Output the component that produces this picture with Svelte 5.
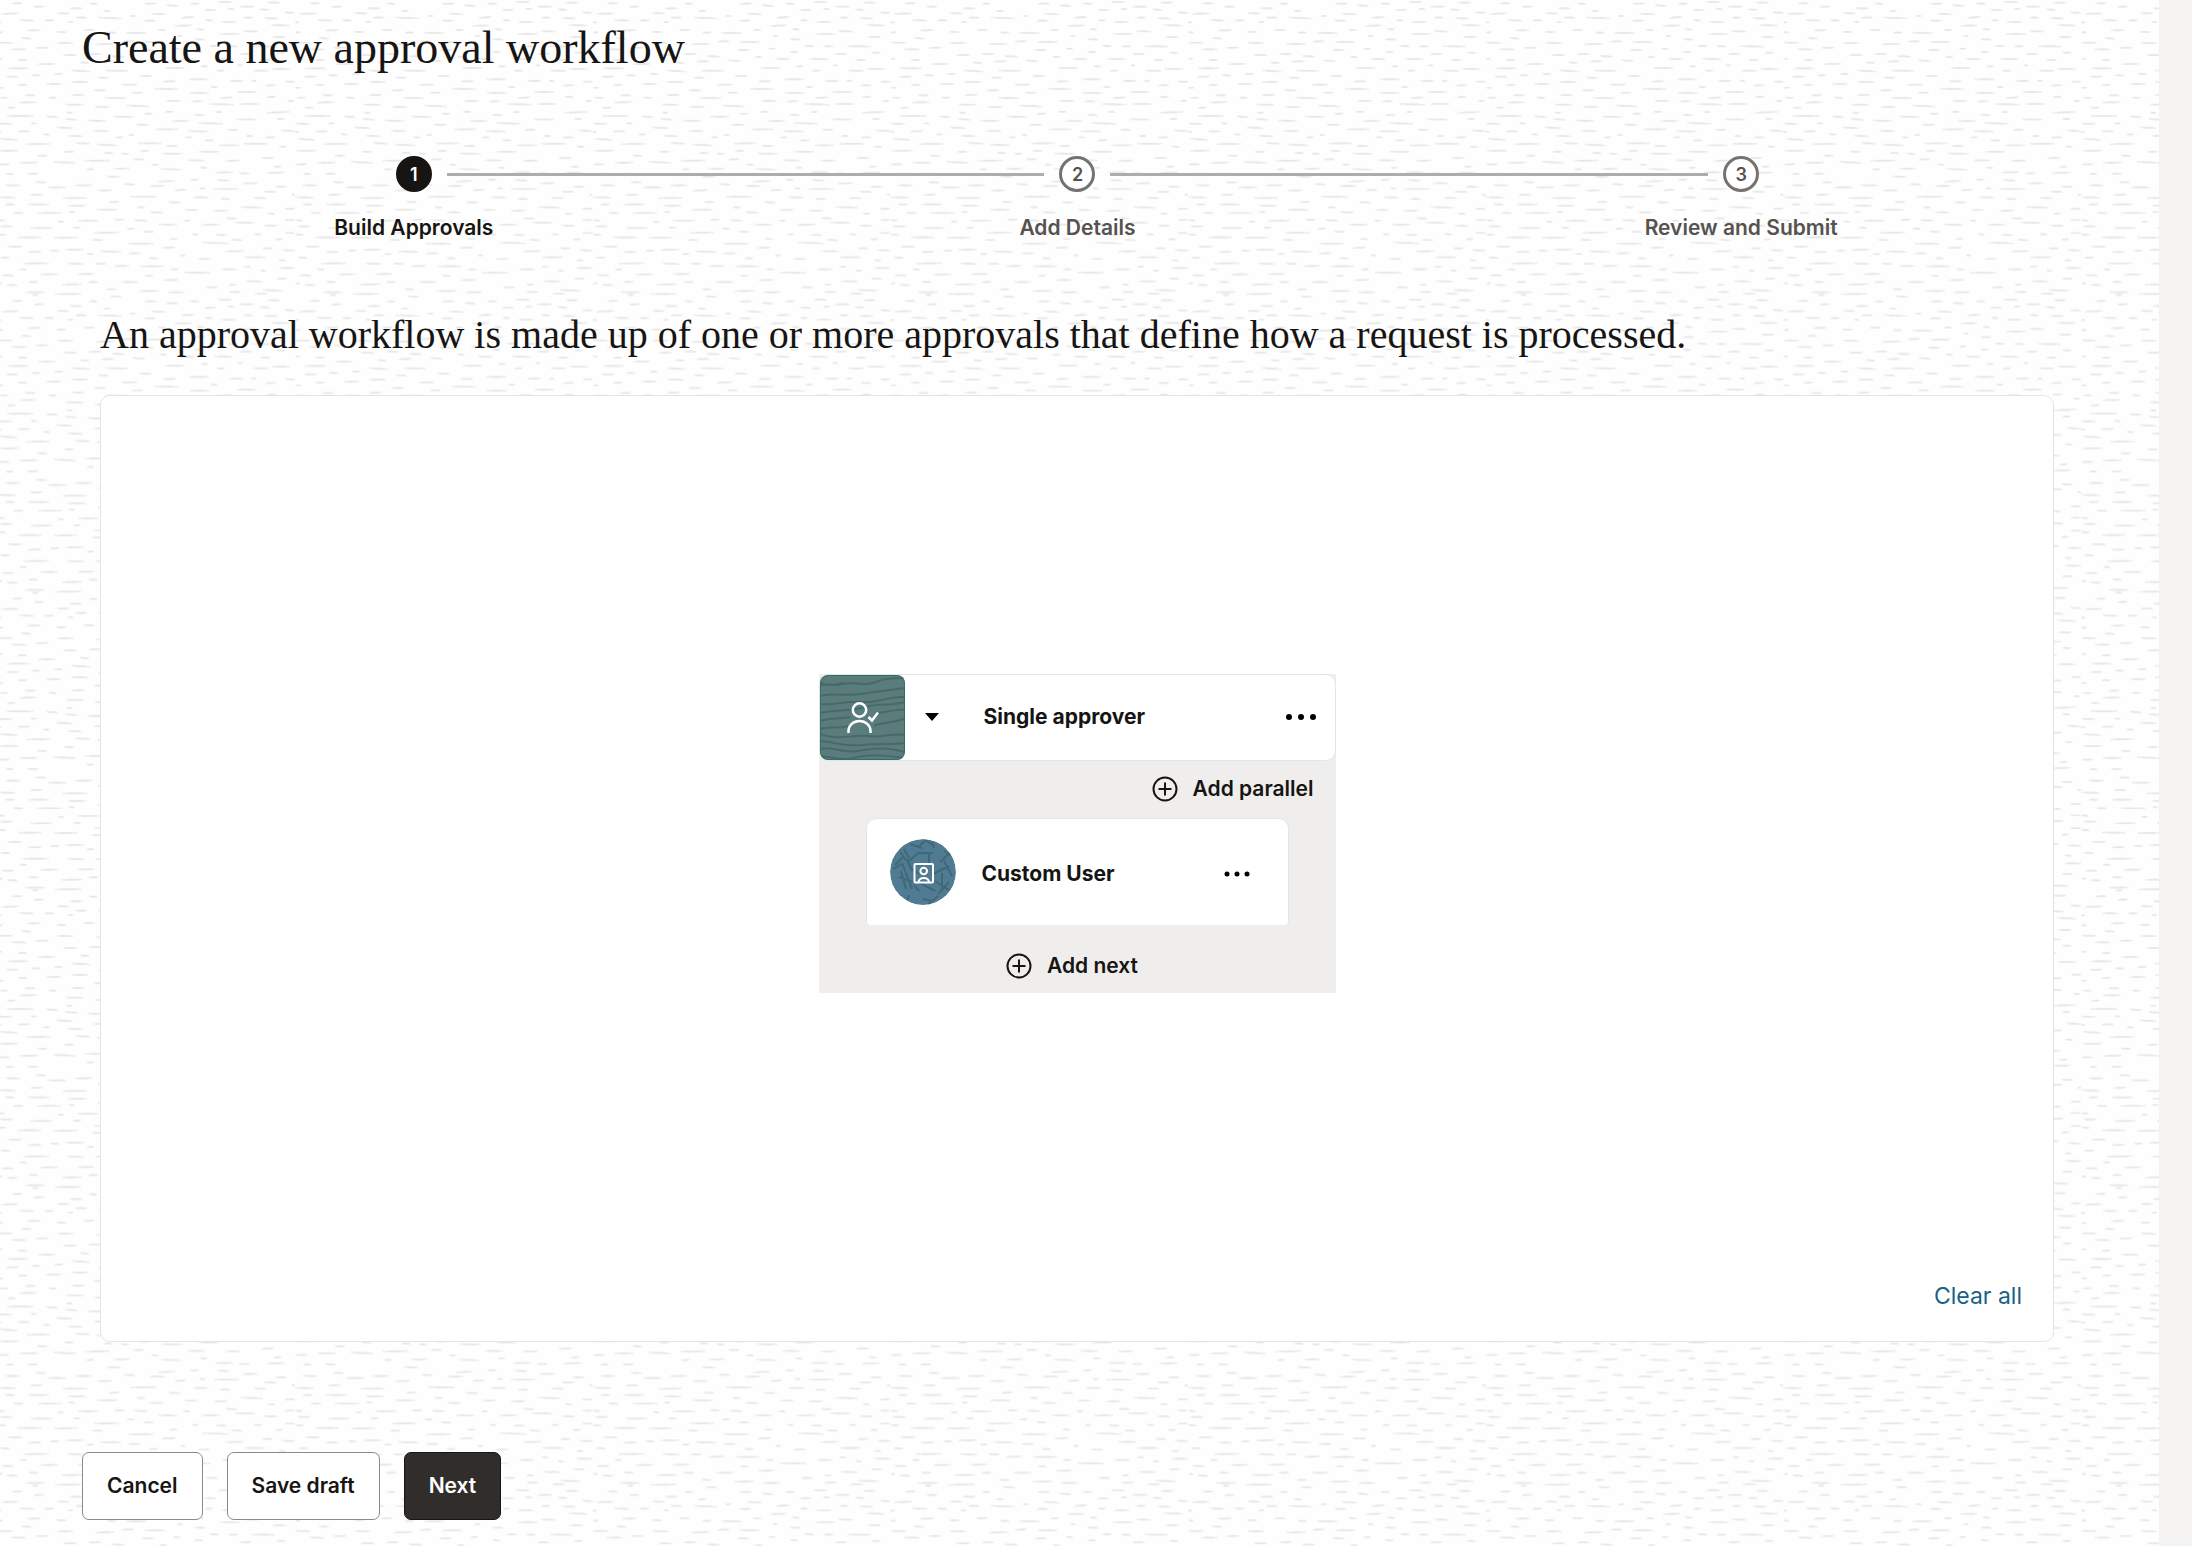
<script>
  const steps = [
    { number: 1, label: 'Build Approvals', current: true },
    { number: 2, label: 'Add Details', current: false },
    { number: 3, label: 'Review and Submit', current: false },
  ];

  // Grain strokes of one texture tile: [x start, y, x end, tilt]
  const grain = [
    [44,10,75,-1],[110,20,140,-1],[276,11,300,1],[442,11,478,-1],[508,17,542,3],[578,11,606,1],[663,6,703,1],[727,20,771,0],[812,8,848,0],[218,25,255,0],[318,33,340,-1],
    [12,41,64,-2],[180,40,216,1],[398,48,415,0],[462,42,507,3],[622,30,656,0],[692,27,711,1],[788,29,816,2],[862,38,893,2],[235,53,268,0],[302,54,373,3],[66,61,110,2],[141,61,170,0],[212,66,228,0],[1,67,12,0],
    [440,62,474,0],[552,52,590,-3],[624,61,646,0],[671,66,716,0],[740,53,766,0],[802,55,841,2],[822,76,876,2],[532,77,582,-2],[90,91,130,-1],[2,97,16,0],[178,96,207,1],[260,90,292,-1],[330,98,356,0],[388,99,447,1],[482,90,505,1],[598,88,620,2],
    [668,102,728,0],[738,94,782,2],[827,111,864,0],[540,108,556,0],[592,118,624,1],[72,115,102,2],[2,128,46,1],[180,129,228,1],[296,132,352,-2],[374,124,409,-2],[442,126,501,0],[116,143,153,-1],[42,148,88,1],[636,138,664,2],[694,139,721,0],[764,139,833,1],[528,146,548,0],[434,150,469,0],[592,156,616,2],[838,158,863,1],
    [727,162,763,-1],[198,165,238,0],[274,162,311,-1],[343,169,382,2],[487,171,509,1],[549,177,591,2],[651,177,706,2],[2,176,15,0],[62,180,89,0],[790,180,820,1],[406,182,443,3],[312,184,350,-1],[122,192,173,-1],[249,188,275,2],[721,196,735,1],[611,199,631,0],[504,204,562,0],[31,205,93,0],[824,207,878,1],
    [222,213,280,4],[326,212,392,1],[659,212,682,-1],[768,212,813,1],[171,222,196,-1],[102,226,129,1],[427,228,464,1],[28,230,64,-1],[303,233,334,1],[575,238,634,0],[223,246,272,0],[498,244,535,-1],[697,243,738,0],[762,243,778,0],[864,245,893,1],
    [62,255,89,-1],[147,252,192,-1],[373,254,419,-1],[804,256,836,-1],[2,263,18,0],[640,261,661,1],[472,267,543,1],[289,271,326,0],[404,278,437,0],[576,279,636,1],[719,276,777,0],[83,286,115,0],[222,285,260,-1],[6,293,32,0],[154,293,178,1],[323,294,386,2],[668,293,706,-2],[808,291,835,-1],[508,303,551,0],[583,304,615,-1],[871,303,890,0],
    [66,307,118,-1],[206,314,258,1],[636,313,710,2],[728,312,784,0],[293,321,336,0],[389,318,455,3],[30,323,55,-1],[504,335,528,0],[440,341,466,-1],[208,338,226,1],[655,336,674,0],[808,337,878,-3],[592,345,622,2],[29,348,108,0],[147,350,181,3],[350,350,410,1],[203,358,241,3],[718,358,778,1],[838,357,861,0],[525,363,577,-1],[270,362,327,1],
    [101,370,118,1],[2,371,44,1],[604,370,676,2],[417,374,455,0],[178,383,226,3],[477,388,543,-1],[690,389,721,0],[851,392,893,3],[288,393,333,1],[61,394,98,-1],[573,394,633,1],[2,396,11,0],[138,403,158,1],[395,405,410,1],[213,408,257,2],[747,408,767,0],[356,412,376,-1],[563,412,584,0],[804,412,835,-1],[8,418,60,4],[622,421,650,-1],
    [86,432,160,-1],[234,430,278,2],[299,435,360,3],[423,430,492,-1],[740,431,814,0],[507,438,541,0],[665,436,725,0],[845,440,868,2],[4,452,64,-1],[201,455,230,0],[320,459,347,1],[428,453,456,-1],[372,461,395,1],[494,461,556,1],[605,455,665,0],[120,467,150,1],[792,474,830,-1],[408,478,440,-1],[262,482,338,-1],[571,481,622,1],[684,482,728,-1],[66,488,122,-1],[168,487,234,4],[2,493,36,-1],
    [463,494,484,1],[828,500,852,-1],[268,508,290,-1],[348,506,396,-1],[490,508,553,3],[609,503,630,1],[655,517,707,-1],[91,521,122,0],[808,518,862,-2],[726,520,757,0],[26,522,48,0],[328,530,370,1],[578,539,604,-1],[482,544,533,-3],[660,541,696,2],[115,547,147,1],[736,550,780,-1],[24,556,67,1],[233,556,283,-1],[380,553,413,2],[834,560,868,1],[457,558,503,-1],[152,562,207,0],[607,565,624,0],[533,570,567,-2],[300,571,344,-1],[648,567,724,0],[800,575,838,1],
    [99,584,136,-2],[883,584,893,1],[400,590,478,0],[1,592,55,2],[197,594,269,-1],[588,592,633,1],[770,594,806,1],[669,597,699,1],[335,606,365,-1],[514,607,549,1],[24,613,52,0],[94,613,155,0],[214,617,265,0],[420,622,443,1],[729,622,795,2],[300,629,360,0],[563,630,602,0],[862,626,893,-1],[648,632,691,-2],[48,639,78,1],[120,639,194,0],[214,636,232,1],[458,637,498,1],[811,641,832,1],
    [686,655,719,1],[352,659,382,-1],[241,662,304,0],[411,661,450,2],[560,662,578,0],[2,661,22,2],[862,660,892,0],[182,665,200,1],[712,668,772,1],[483,674,539,1],[613,674,668,-1],[801,677,840,1],[8,679,46,0],[228,683,250,0],[100,684,163,-1],[389,686,412,0],[438,695,469,1],[291,698,365,-1],[862,699,893,0],[2,704,26,2],[585,703,603,1],[656,705,688,1],[770,703,792,1],[62,712,132,0],[170,713,240,-1],
    [517,717,540,0],[834,718,856,-1],[703,720,735,2],[285,720,316,1],[394,731,468,0],[616,729,694,3],[32,740,74,0],[494,743,534,-2],[796,745,826,0],[205,749,260,-1],[854,751,893,2],[160,752,185,0],[93,756,131,-1],[684,754,738,-1],[310,755,371,2],[393,760,430,-1],[269,762,290,-1],[549,766,564,0],[10,773,38,1],[742,772,804,0],[456,775,482,1],[603,777,639,0],[845,781,865,1],
    [78,790,155,-1],[211,791,260,2],[295,791,326,1],[349,798,395,-2],[430,799,499,0],[740,800,761,0],[846,804,893,0],[67,808,88,1],[520,808,543,0],[674,808,718,0],[789,812,806,2],[561,818,640,1],[241,822,291,-1],[130,823,182,-1],[13,826,49,1],[443,827,467,0],[837,836,868,1],[498,840,543,-1],[745,844,796,1],[274,846,303,0],[372,846,422,0],[94,846,123,1],[2,850,15,-1],[193,853,255,-1],[695,854,716,0],[29,855,60,2],[626,862,660,0],[328,868,356,0],[796,871,857,2],[425,873,485,-1],
    [84,877,142,0],[512,877,561,0],[695,876,730,-1],[173,882,251,-1],[105,885,123,0],[772,881,811,0],[339,890,373,2]
  ];
</script>

{#snippet plusIcon()}
  <svg class="plus" viewBox="0 0 26 26" aria-hidden="true">
    <circle cx="13" cy="13" r="11.5" />
    <path d="M13 6.5v13M6.500 13h13" />
  </svg>
{/snippet}

<div class="page">
  <svg class="texture" aria-hidden="true">
    <defs>
      <pattern id="grain" width="893" height="893" patternUnits="userSpaceOnUse" patternTransform="translate(-2.67 0) scale(0.33333)">
        {#each grain as [x1, y, x2, tilt]}
          <path d={`M${x1 + 2} ${y - tilt / 2}L${x2 - 2} ${y + tilt / 2}`} />
          <path d={`M${x1 + (x2 - x1) / 4} ${y}H${x2 - (x2 - x1) / 4}`} />
        {/each}
      </pattern>
    </defs>
    <rect width="100%" height="100%" fill="url(#grain)" />
  </svg>

  <main>
    <h1>Create a new approval workflow</h1>

    <ol class="stepper">
      {#each steps as step}
        <li class:current={step.current} aria-current={step.current ? 'step' : undefined}>
          <span class="marker">{step.number}</span>
          <span class="label">{step.label}</span>
        </li>
      {/each}
    </ol>

    <section>
      <h2>An approval workflow is made up of one or more approvals that define how a request is processed.</h2>

      <div class="board">
        <div class="canvas">
          <div class="stage">
            <div class="stage-head">
              <svg class="tile" viewBox="0 0 85 85" aria-hidden="true">
                <rect width="85" height="85" fill="#5a7d7c" />
                <g class="waves">
                  <path d="M0 10C9 8 13 12 23 9S44 12 56 7 76 4 85 3" />
                  <path d="M0 8C9 12 16 9 24 8" />
                  <path d="M0 21C13 18 27 21 41 19S62 16 85 13" />
                  <path d="M0 29C16 31 26 25 42 27S66 21 85 22" />
                  <path d="M0 38C16 34 27 37 45 32S70 32 85 27" />
                  <path d="M0 46C12 42 17 45 30 42M56 38C66 38 76 33 85 35" />
                  <path d="M0 54C14 50 17 55 28 51M54 51C63 46 74 49 85 43" />
                  <path d="M0 59C16 66 33 59 48 61S70 58 85 60" />
                  <path d="M0 66C15 67 25 72 43 70S68 70 85 68" />
                  <path d="M0 74C13 70 22 79 38 76S65 72 85 77" />
                  <path d="M0 82C12 80 20 87 34 83S63 80 85 83" />
                </g>
                <g class="lines">
                  <circle cx="39.500" cy="35" r="6.700" />
                  <path d="M28.500 58V56a11 10 0 0 1 22 0v2M48.500 42l3.500 3.500L58 37.500" />
                </g>
                <rect x="0.500" y="0.500" width="84" height="84" rx="8" fill="none" stroke="#2c6f6d" />
              </svg>
              <button class="icon-button caret" aria-label="Change approval type">
                <svg width="14" height="8" viewBox="0 0 14 8" aria-hidden="true"><path d="M0 0H14L7 8Z" /></svg>
              </button>
              <strong>Single approver</strong>
              <button class="icon-button" aria-label="Single approver actions">
                <svg width="32" height="8" viewBox="0 0 32 8" aria-hidden="true">
                  <circle cx="4" cy="4" r="3" /><circle cx="16" cy="4" r="3" /><circle cx="28" cy="4" r="3" />
                </svg>
              </button>
            </div>

            <button class="add parallel">{@render plusIcon()}Add parallel</button>

            <div class="approver">
              <svg class="avatar" viewBox="0 0 66 66" aria-hidden="true">
                <circle cx="33" cy="33" r="33" fill="#4f7b93" />
                <g class="twigs">
                  <path d="M20 5l12 4M28 8l8-7 8 6M42 3l2 6M10 13l6 8M14 10l5 9M18 23l9-8M27 14h16M39 14v11M50 23l14-13M54 12l7 4M5 26l8-8M12 24l10 26M3 30l9-5M17 20l5 12M21 29l8 6M43 35l16-8M54 22l8 15M9 38l14 5M11 32l5 18M28 43l17 9M45 42l14 9M52 34v18M48 55l11-12M19 56l-3 9M33 60l10 2M38 65l10-8M24 46l5 6" />
                </g>
                <g class="lines">
                  <rect x="24.500" y="25" width="18.500" height="18.500" rx="1" />
                  <circle cx="33.700" cy="32" r="3.300" />
                  <path d="M28.500 43a5.300 4.500 0 0 1 10.500 0" />
                </g>
              </svg>
              <strong>Custom User</strong>
              <button class="icon-button" aria-label="Custom User actions">
                <svg width="26" height="6" viewBox="0 0 26 6" aria-hidden="true">
                  <circle cx="3" cy="3" r="2.500" /><circle cx="13" cy="3" r="2.500" /><circle cx="23" cy="3" r="2.500" />
                </svg>
              </button>
            </div>

            <button class="add next-step">{@render plusIcon()}Add next</button>
          </div>
        </div>
        <button class="clear">Clear all</button>
      </div>
    </section>

    <div class="actions">
      <button>Cancel</button>
      <button>Save draft</button>
      <button class="primary">Next</button>
    </div>
  </main>
</div>

<style>
  :global(body) {
    background: #f4f3f2;
  }

  .page {
    position: relative;
    box-sizing: border-box;
    min-height: 100vh;
    margin-right: 33px;
    padding: 20px 86px 28px 82px;
    background: #fefefe;
    color: #161513;
    font-family: Inter, 'Liberation Sans', sans-serif;
    font-size: 21px;
    line-height: 28px;
  }

  .texture {
    position: absolute;
    inset: 0;
    width: 100%;
    height: 100%;
  }

  .texture path {
    fill: none;
    stroke: #e4e4e4;
    stroke-width: 5;
    stroke-linecap: round;
    opacity: 0.65;
  }

  main {
    position: relative;
  }

  h1,
  h2 {
    margin: 0;
    font-family: 'Liberation Serif', serif;
    font-weight: 400;
  }

  h1 {
    font-size: 46px;
    line-height: 56px;
  }

  h2 {
    font-size: 40px;
    line-height: 48px;
  }

  button {
    padding: 0;
    border: 0;
    background: none;
    color: inherit;
    font: inherit;
    cursor: pointer;
  }

  .stepper {
    display: grid;
    grid-template-columns: repeat(3, 1fr);
    margin: 80px 0 0;
    padding: 0;
    list-style: none;
  }

  .stepper li {
    display: grid;
    grid-template-columns: 1fr 36px 1fr;
    column-gap: 15px;
    row-gap: 22px;
    align-items: center;
    color: #55524f;
    font-weight: 600;
  }

  .stepper li::before,
  .stepper li::after {
    content: '';
    height: 3px;
    background: #adadac;
  }

  .stepper li::after {
    grid-area: 1 / 3;
  }

  .stepper li:first-child::before,
  .stepper li:last-child::after {
    visibility: hidden;
  }

  .marker {
    grid-area: 1 / 2;
    box-sizing: border-box;
    height: 36px;
    border: 3px solid #75726f;
    border-radius: 50%;
    background: #fff;
    font-size: 18px;
    line-height: 32px;
    text-align: center;
  }

  .label {
    grid-area: 2 / 1 / 3 / 4;
    text-align: center;
  }

  .stepper .current {
    color: #161513;
  }

  .current .marker {
    border-color: #161513;
    background: #161513;
    color: #fff;
  }

  section {
    margin: 69px 19px 0 18px;
  }

  .board {
    display: flex;
    flex-direction: column;
    margin-top: 36px;
    padding: 0 31px 26px;
    border: 1px solid #e4e4e3;
    border-radius: 10px;
    background: #fff;
  }

  .canvas {
    display: grid;
    place-items: center;
    min-height: 874px;
  }

  .stage {
    display: flex;
    flex-direction: column;
    width: 517px;
    padding-bottom: 13px;
    background: #efeeec;
    font-weight: 600;
  }

  .stage strong {
    flex: 1;
    font-weight: 700;
  }

  .stage-head {
    display: flex;
    align-items: center;
    padding-right: 18px;
    border: 1px solid #e6e5e3;
    border-radius: 10px;
    background: #fff;
  }

  .tile {
    width: 85px;
    height: 85px;
    border-radius: 8px;
  }

  .waves,
  .twigs {
    fill: none;
    stroke: #2d4d50;
    stroke-width: 2;
    opacity: 0.4;
  }

  .lines {
    fill: none;
    stroke: #fff;
    stroke-width: 2.5;
  }

  .avatar .lines {
    stroke-width: 2;
  }

  .icon-button {
    display: flex;
    align-items: center;
    min-height: 32px;
  }

  .caret {
    margin: 0 45px 0 20px;
  }

  .add {
    display: flex;
    align-items: center;
    gap: 15px;
  }

  .plus {
    width: 26px;
    height: 26px;
    fill: none;
    stroke: #161513;
    stroke-width: 2;
  }

  .parallel {
    align-self: flex-end;
    margin: 14px 22px 15px 0;
  }

  .approver {
    display: flex;
    align-items: center;
    margin: 0 47px;
    padding: 21px 38px 17px 23px;
    border: 1px solid #e6e5e3;
    border-bottom: 0;
    border-radius: 10px 10px 4px 4px;
    background: #fff;
  }

  .avatar {
    width: 66px;
    height: 66px;
    margin: -4px 26px 0 0;
    border-radius: 50%;
  }

  .approver::after {
    content: '';
    height: 68px;
  }

  .next-step {
    align-self: center;
    margin: 27px 10px 0 0;
  }

  .clear {
    align-self: flex-end;
    margin-top: 7px;
    color: #1b5f87;
    font-size: 23px;
    line-height: 38px;
  }

  .actions {
    display: flex;
    gap: 24px;
    margin-top: 110px;
  }

  .actions button {
    padding: 19px 24px;
    border: 1px solid #8c8a88;
    border-radius: 7px;
    background: #fff;
    font-weight: 600;
  }

  .actions .primary {
    border-color: #161513;
    background: #312d2a;
    color: #fff;
  }
</style>
